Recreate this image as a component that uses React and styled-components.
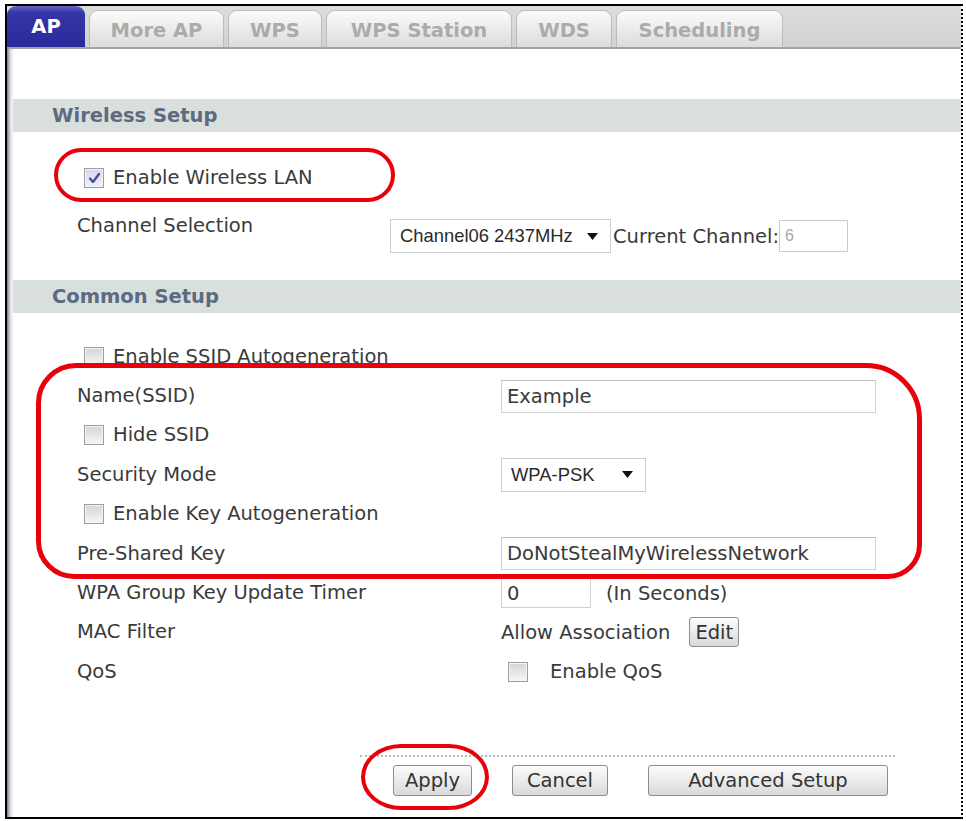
import React from "react";
import styled, { createGlobalStyle } from "styled-components";

const Global = createGlobalStyle`
  html, body { margin: 0; padding: 0; background: #fff; }
  body { font-family: "DejaVu Sans", Verdana, sans-serif; color: #383838; }
  * { box-sizing: border-box; }
`;

const Frame = styled.div`
  position: relative;
  margin: 4px 0 0 5px;
  width: 958px;
  height: 815px;
  border-top: 2px solid #000;
  border-left: 2px solid #000;
  border-bottom: 2px solid #000;
  border-right: 2px dotted #000;
  display: flex;
  flex-direction: column;
  overflow: hidden;
`;

const TabBar = styled.div`
  display: flex;
  align-items: flex-end;
  gap: 4px;
  height: 43px;
  background: linear-gradient(#dcdcdc, #d2d2d2);
  border-bottom: 2px solid #a3a3a3;
`;

const Tab = styled.div`
  width: ${(p) => p.$w}px;
  height: ${(p) => (p.$active ? 41 : 37)}px;
  display: flex;
  align-items: center;
  justify-content: center;
  font-weight: bold;
  font-size: 19.5px;
  border-radius: 9px 9px 0 0;
  color: ${(p) => (p.$active ? "#fff" : "#ababab")};
  background: ${(p) =>
    p.$active
      ? "linear-gradient(#6464c4 0px, #3535a6 7px, #2a2a9c 100%)"
      : "linear-gradient(#fbfbfb, #e8e8e8 60%, #dcdcdc)"};
  border: ${(p) => (p.$active ? "none" : "1px solid #bdbdbd")};
  border-bottom: none;
  padding-top: ${(p) => (p.$active ? 0 : 2)}px;
`;

const Body = styled.div`
  flex: 1;
  display: flex;
  flex-direction: column;
  padding: 50px 0 0 6px;
  background: linear-gradient(
    to right,
    #7a7e8c 0px,
    #b6b9c6 2px,
    #e6e7ee 4px,
    #ffffff 7px
  );
`;

const SectionHeader = styled.div`
  height: 33px;
  line-height: 33px;
  margin-top: ${(p) => p.$mt || 0}px;
  padding-left: 39px;
  background: #d8dfdd;
  color: #5d6a80;
  font-weight: bold;
  font-size: 19.5px;
`;

const SectionBody = styled.div`
  padding: ${(p) => p.$pt}px 0 0 64px;
  display: flex;
  flex-direction: column;
`;

const Row = styled.div`
  display: flex;
  align-items: ${(p) => (p.$top ? "flex-start" : "center")};
  height: ${(p) => p.$h || 39.4}px;
  margin-top: ${(p) => p.$mt || 0}px;
  font-size: 19.5px;
`;

const Label = styled.div`
  width: ${(p) => p.$w || 424}px;
  flex: none;
  line-height: 20px;
  color: #3a3a3a;
  margin-top: ${(p) => p.$mt || 0}px;
`;

const CheckLabel = styled.label`
  display: flex;
  align-items: center;
  gap: ${(p) => p.$gap || 9}px;
  padding-left: ${(p) => p.$indent || 0}px;
  color: #3a3a3a;
  line-height: 20px;
`;

const Box = styled.span`
  width: 20px;
  height: 20px;
  flex: none;
  border: 1px solid #9d9d9d;
  background: ${(p) =>
    p.$checked
      ? "linear-gradient(#d6d6ec, #f0f0fa)"
      : "linear-gradient(#d5d5d5, #f6f6f6)"};
  box-shadow: inset 0 0 0 1px #f4f4f4;
  display: flex;
  align-items: center;
  justify-content: center;
`;

const Checkbox = ({ checked }) => (
  <Box $checked={checked}>
    {checked && (
      <svg width="13" height="13" viewBox="0 0 13 13">
        <path
          d="M2 6.5 L5 10 L11 2"
          fill="none"
          stroke="#3e4c9a"
          strokeWidth="2.2"
          strokeLinecap="round"
          strokeLinejoin="round"
        />
      </svg>
    )}
  </Box>
);

const TextInput = styled.input`
  width: ${(p) => p.$w}px;
  height: ${(p) => p.$h || 33}px;
  border: 1px solid #d2d2d2;
  border-top-color: #bdbdbd;
  background: #fff;
  padding: 0 0 0 5px;
  margin: 0;
  font-family: "DejaVu Sans", Verdana, sans-serif;
  font-size: 19.5px;
  color: #3a3a3a;
  outline: none;
`;

const SmallInput = styled.input`
  width: ${(p) => p.$w}px;
  height: 32px;
  border: 1px solid #c9c9c9;
  background: #fff;
  padding: 0 0 0 5px;
  margin: 0;
  font-family: "Liberation Sans", Arial, sans-serif;
  font-size: 16px;
  color: #a8a8a8;
  outline: none;
`;

const SelectBox = styled.div`
  width: ${(p) => p.$w}px;
  height: 34px;
  flex: none;
  display: flex;
  align-items: center;
  justify-content: space-between;
  border: 1px solid #cdcdcd;
  background: #fff;
  padding: 0 12px 0 9px;
  font-family: "Liberation Sans", Arial, sans-serif;
  font-size: 18.4px;
  color: #2a2a2a;
`;

const Select = ({ w, children }) => (
  <SelectBox $w={w}>
    <span>{children}</span>
    <svg width="11" height="7" viewBox="0 0 11 7">
      <path d="M0 0 H11 L5.5 7 Z" fill="#111" />
    </svg>
  </SelectBox>
);

const Inline = styled.div`
  display: flex;
  align-items: center;
  gap: ${(p) => p.$gap || 0}px;
  color: #3a3a3a;
`;

const Button = styled.button`
  width: ${(p) => p.$w}px;
  height: ${(p) => p.$h || 31}px;
  margin: 0;
  padding: 0;
  border: 1.5px solid #8d8d8d;
  border-radius: 3px;
  background: linear-gradient(#fbfbfb, #ebebeb 50%, #d9d9d9);
  font-family: "DejaVu Sans", Verdana, sans-serif;
  font-size: 19.5px;
  color: #333;
  box-shadow: inset 0 1px 0 #fff;
`;

const Footer = styled.div`
  margin: 63px 0 0 347px;
  width: 535px;
  border-top: 2px dotted #b9b9b9;
  padding: 8px 0 0 33px;
  display: flex;
  gap: 40px;
`;

const Highlight = styled.div`
  position: absolute;
  left: ${(p) => p.$x}px;
  top: ${(p) => p.$y}px;
  width: ${(p) => p.$w}px;
  height: ${(p) => p.$h}px;
  border: ${(p) => p.$s || 4.5}px solid #e8000a;
  border-radius: ${(p) => p.$r};
  pointer-events: none;
`;

const tabs = [
  { name: "AP", w: 78, active: true },
  { name: "More AP", w: 135 },
  { name: "WPS", w: 94 },
  { name: "WPS Station", w: 186 },
  { name: "WDS", w: 96 },
  { name: "Scheduling", w: 167 },
];

export default function App() {
  return (
    <>
      <Global />
      <Frame>
        <TabBar>
          {tabs.map((t) => (
            <Tab key={t.name} $w={t.w} $active={t.active}>
              {t.name}
            </Tab>
          ))}
        </TabBar>
        <Body>
          <SectionHeader>Wireless Setup</SectionHeader>
          <SectionBody $pt={26}>
            <Row $h={40}>
              <CheckLabel $indent={7}>
                <Checkbox checked />
                Enable Wireless LAN
              </CheckLabel>
            </Row>
            <Row $h={34} $mt={21} $top>
              <Label $w={313} $mt={-3}>
                Channel Selection
              </Label>
              <Inline>
                <Select w={221}>Channel06 2437MHz</Select>
                <span style={{ marginLeft: 2 }}>Current Channel:</span>
                <SmallInput $w={69} readOnly value="6" />
              </Inline>
            </Row>
          </SectionBody>
          <SectionHeader $mt={27}>Common Setup</SectionHeader>
          <SectionBody $pt={24}>
            <Row>
              <CheckLabel $indent={7}>
                <Checkbox />
                Enable SSID Autogeneration
              </CheckLabel>
            </Row>
            <Row>
              <Label>Name(SSID)</Label>
              <TextInput $w={375} readOnly value="Example" />
            </Row>
            <Row>
              <CheckLabel $indent={7}>
                <Checkbox />
                Hide SSID
              </CheckLabel>
            </Row>
            <Row>
              <Label>Security Mode</Label>
              <Select w={145}>WPA-PSK</Select>
            </Row>
            <Row>
              <CheckLabel $indent={7}>
                <Checkbox />
                Enable Key Autogeneration
              </CheckLabel>
            </Row>
            <Row>
              <Label>Pre-Shared Key</Label>
              <TextInput $w={375} readOnly value="DoNotStealMyWirelessNetwork" />
            </Row>
            <Row>
              <Label>WPA Group Key Update Timer</Label>
              <Inline $gap={15}>
                <TextInput $w={90} $h={30} readOnly value="0" />
                <span>(In Seconds)</span>
              </Inline>
            </Row>
            <Row>
              <Label>MAC Filter</Label>
              <Inline $gap={19}>
                <span>Allow Association</span>
                <Button $w={50} $h={30}>
                  Edit
                </Button>
              </Inline>
            </Row>
            <Row>
              <Label>QoS</Label>
              <CheckLabel $indent={7} $gap={22}>
                <Checkbox />
                Enable QoS
              </CheckLabel>
            </Row>
          </SectionBody>
          <Footer>
            <Button $w={79}>Apply</Button>
            <Button $w={96}>Cancel</Button>
            <Button $w={240}>Advanced Setup</Button>
          </Footer>
        </Body>
        <Highlight $x={47} $y={142} $w={341} $h={54} $r="27px" />
        <Highlight
          $x={29}
          $y={357}
          $w={886}
          $h={216}
          $s={5}
          $r="40px 56px 34px 38px"
        />
        <Highlight $x={354} $y={738} $w={128} $h={66} $r="40px / 33px" />
      </Frame>
    </>
  );
}
